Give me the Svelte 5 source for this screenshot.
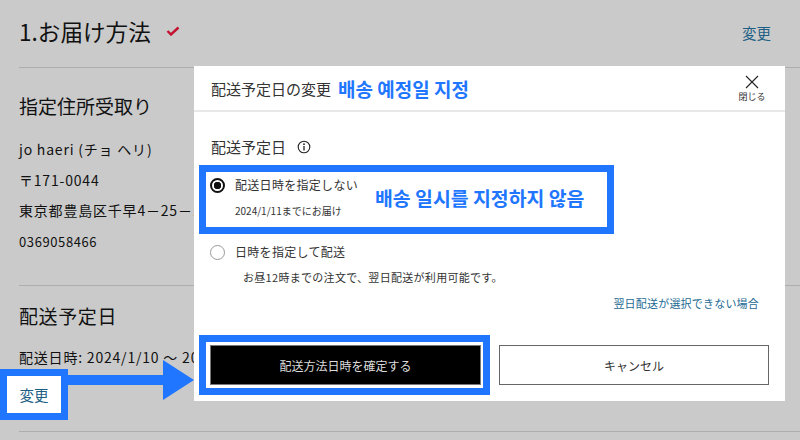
<script>
  const address = ['jo haeri (チョ ヘリ)', '〒171-0044', '東京都豊島区千早4－25－12'];
</script>

<div class="page">
  <header class="head">
    <h1>1.お届け方法</h1>
    <svg class="check" viewBox="0 0 14 10" width="14" height="10">
      <path d="M1.5 5 L5 8.5 L12.5 1.5" fill="none" stroke="#c3112e" stroke-width="2.4" />
    </svg>
    <a class="change" href="#top">変更</a>
  </header>

  <section class="sec first">
    <h2>指定住所受取り</h2>
    {#each address as line}
      <p>{line}</p>
    {/each}
    <p class="tel">0369058466</p>
  </section>

  <section class="sec second">
    <h2>配送予定日</h2>
    <p>配送日時: 2024/1/10 ～ 2024/1/11</p>
  </section>

  <!-- annotation: change link with arrow -->
  <div class="mark">変更</div>
  <svg class="arrow" viewBox="0 0 128 40" width="128" height="40">
    <path d="M0 15 H95 V0 L126 20 L95 40 V25 H0 Z" fill="#2176ff" />
  </svg>

  <div class="modal">
    <div class="modal-head">
      <span class="modal-title">配送予定日の変更</span>
      <span class="ko title-ko">배송 예정일 지정</span>
      <button class="close">
        <svg viewBox="0 0 14 14" width="14" height="14">
          <path d="M1 1 L13 13 M13 1 L1 13" stroke="#222" stroke-width="1.1" fill="none" />
        </svg>
        <span>閉じる</span>
      </button>
    </div>

    <div class="modal-body">
      <div class="field-label">
        <span>配送予定日</span>
        <svg viewBox="0 0 14 14" width="14" height="14">
          <circle cx="7" cy="7" r="5.8" fill="none" stroke="#222" stroke-width="1.1" />
          <circle cx="7" cy="4.2" r="0.9" fill="#222" />
          <path d="M7 6 V10.5" stroke="#222" stroke-width="1.3" />
        </svg>
      </div>

      <div class="option picked">
        <span class="radio on"></span>
        <div class="opt-text">
          <div class="opt-label">配送日時を指定しない</div>
          <div class="opt-sub">2024/1/11までにお届け</div>
        </div>
        <span class="ko opt-ko">배송 일시를 지정하지 않음</span>
      </div>

      <div class="option plain">
        <span class="radio"></span>
        <div class="opt-label">日時を指定して配送</div>
      </div>
      <p class="note">お昼12時までの注文で、翌日配送が利用可能です。</p>
      <a class="link" href="#top">翌日配送が選択できない場合</a>
    </div>

    <div class="actions">
      <div class="confirm-wrap">
        <button class="btn confirm">配送方法日時を確定する</button>
      </div>
      <button class="btn cancel">キャンセル</button>
    </div>
  </div>
</div>

<style>
  :global(body) {
    margin: 0;
    background: #cacaca;
  }

  .page {
    position: relative;
    width: 800px;
    height: 440px;
    overflow: hidden;
    box-sizing: border-box;
    padding-left: 19px;
    background: #cacaca;
    color: #111;
    font-family: "Noto Sans CJK JP", "Liberation Sans", sans-serif;
  }

  .head {
    display: flex;
    align-items: center;
    height: 67px;
    border-bottom: 1px solid #aeaeae;
    box-sizing: content-box;
    padding-right: 29px;
  }

  h1 {
    margin: 0 0 3px;
    font-size: 22.6px;
    font-weight: 400;
    line-height: 1;
  }

  .check {
    margin: 0 0 6px 15px;
  }

  .change {
    margin: 0 0 3px auto;
    font-size: 14.5px;
    color: #1c5f85;
    text-decoration: none;
  }

  .sec {
    border-bottom: 1px solid #aeaeae;
    box-sizing: border-box;
  }

  .first {
    height: 218px;
    padding-top: 25px;
  }

  .second {
    height: 146px;
    padding-top: 17px;
  }

  h2 {
    margin: 0 0 20px;
    font-size: 19px;
    font-weight: 400;
    line-height: 26px;
  }

  .sec p {
    margin: 0 0 9.5px;
    font-size: 14px;
    line-height: 21px;
    letter-spacing: 0.8px;
    white-space: nowrap;
  }

  .sec .tel {
    font-size: 13px;
    letter-spacing: 0.6px;
  }

  .second h2 {
    margin-bottom: 18px;
    letter-spacing: 0.6px;
  }

  /* annotations */
  .mark {
    position: absolute;
    left: 0;
    top: 369px;
    width: 68px;
    height: 51px;
    box-sizing: border-box;
    border: 7px solid #2176ff;
    background: #fff;
    color: #1c5f85;
    font-size: 14.5px;
    display: flex;
    align-items: center;
    justify-content: center;
  }

  .arrow {
    position: absolute;
    left: 68px;
    top: 360px;
  }

  /* modal */
  .modal {
    position: absolute;
    left: 194px;
    top: 66px;
    width: 591px;
    height: 335px;
    background: #fff;
    display: flex;
    flex-direction: column;
    color: #333;
  }

  .modal-head {
    position: relative;
    height: 44px;
    flex: none;
    display: flex;
    align-items: center;
    padding-left: 17px;
    border-bottom: 2px solid #e8e8e8;
  }

  .modal-title {
    font-size: 15px;
  }

  .ko {
    font-family: "Noto Sans CJK KR", "Liberation Sans", sans-serif;
    font-weight: 700;
    color: #2176ff;
    white-space: nowrap;
  }

  .title-ko {
    margin-left: 7px;
    font-size: 19px;
  }

  .close {
    position: absolute;
    right: 20px;
    top: 9px;
    width: 26px;
    padding: 0;
    border: 0;
    background: none;
    font-family: inherit;
    font-size: 9px;
    line-height: 11px;
    color: #333;
    display: flex;
    flex-direction: column;
    align-items: center;
    white-space: nowrap;
  }

  .close span {
    margin-top: 2px;
  }

  .modal-body {
    flex: 1;
    padding: 0 26px 0 5px;
  }

  .field-label {
    display: flex;
    align-items: center;
    gap: 11px;
    height: 24px;
    margin: 22px 0 7px 12px;
    font-size: 15px;
  }

  .field-label svg {
    margin-top: 1px;
  }

  .option {
    display: flex;
    align-items: flex-start;
    white-space: nowrap;
  }

  .picked {
    position: relative;
    width: 415px;
    height: 69px;
    box-sizing: border-box;
    border: 7px solid #2176ff;
    padding: 4px 0 0 4px;
  }

  .plain {
    margin: 9px 0 0 11px;
  }

  .radio {
    flex: none;
    width: 15px;
    height: 15px;
    box-sizing: border-box;
    border: 1.5px solid #999;
    border-radius: 50%;
    margin-right: 10px;
    margin-top: 2px;
  }

  .radio.on {
    border: 2px solid #111;
    background: radial-gradient(circle, #111 0 3.5px, #fff 4px);
  }

  .opt-text {
    display: flex;
    flex-direction: column;
  }

  .opt-label {
    font-size: 12px;
    line-height: 18px;
    letter-spacing: 0.3px;
  }

  .opt-sub {
    margin-top: 9px;
    font-size: 10px;
    line-height: 16px;
  }

  .opt-ko {
    position: absolute;
    left: 169px;
    top: 11px;
    font-size: 19.4px;
  }

  .note {
    margin: 8px 0 0 44px;
    font-size: 11px;
    line-height: 16px;
    letter-spacing: 0.3px;
    white-space: nowrap;
  }

  .link {
    display: block;
    margin-top: 10px;
    text-align: right;
    font-size: 11px;
    line-height: 16px;
    letter-spacing: 0.2px;
    color: #1c6a92;
    text-decoration: none;
  }

  .actions {
    flex: none;
    display: flex;
    align-items: center;
    gap: 9px;
    padding: 0 16px 6px 5px;
  }

  .confirm-wrap {
    width: 291px;
    height: 60px;
    box-sizing: border-box;
    border: 7px solid #2176ff;
    padding: 3px 2px 3px 4px;
  }

  .btn {
    height: 40px;
    box-sizing: border-box;
    font-family: inherit;
    font-size: 12px;
    padding: 0;
  }

  .confirm {
    display: block;
    width: 100%;
    background: #000;
    border: 1px solid #777;
    color: #ddd;
  }

  .cancel {
    width: 270px;
    background: #fff;
    border: 1px solid #666;
    color: #333;
  }
</style>
